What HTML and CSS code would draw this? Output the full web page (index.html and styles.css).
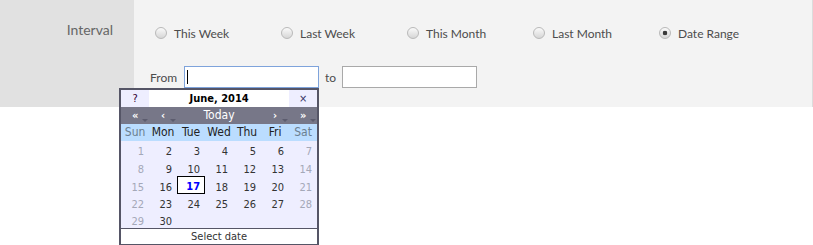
FILE: index.html
```html
<!DOCTYPE html>
<html lang="en">
    <head>
        <meta charset="UTF-8">
        <title> Report filter </title>
        <link rel="stylesheet" href="styles.css">
    </head>
    <body>
        <div class="panel">
            <div class="panel-label">Interval</div>
            <div class="panel-body">
                <div class="options">
                    <label class="option"><input type="radio" name="interval"> This Week</label>
                    <label class="option"><input type="radio" name="interval"> Last Week</label>
                    <label class="option"><input type="radio" name="interval"> This Month</label>
                    <label class="option"><input type="radio" name="interval"> Last Month</label>
                    <label class="option"><input type="radio" name="interval" checked> Date Range</label>
                </div>
                <div class="range">
                    <span class="range-label">From</span>
                    <span class="field">
                        <input type="text" class="date-input focused">
                        <span class="caret"></span>
                        <div class="calendar">
                            <table>
                                <tr class="titlerow">
                                    <td class="btn help">?</td>
                                    <td class="title" colspan="5">June, 2014</td>
                                    <td class="btn close">&times;</td>
                                </tr>
                                <tr class="headrow">
                                    <td class="nav">&laquo;</td>
                                    <td class="nav">&lsaquo;</td>
                                    <td class="today" colspan="3">Today</td>
                                    <td class="nav">&rsaquo;</td>
                                    <td class="nav">&raquo;</td>
                                </tr>
                                <tr class="daynames">
                                    <td class="weekend">Sun</td><td>Mon</td><td>Tue</td><td>Wed</td><td>Thu</td><td>Fri</td><td class="weekend">Sat</td>
                                </tr>
                                <tr class="week">
                                    <td class="weekend">1</td><td>2</td><td>3</td><td>4</td><td>5</td><td>6</td><td class="weekend">7</td>
                                </tr>
                                <tr class="week tall">
                                    <td class="weekend">8</td><td>9</td><td>10</td><td>11</td><td>12</td><td>13</td><td class="weekend">14</td>
                                </tr>
                                <tr class="week">
                                    <td class="weekend">15</td><td>16</td><td class="selected">17</td><td>18</td><td>19</td><td>20</td><td class="weekend">21</td>
                                </tr>
                                <tr class="week">
                                    <td class="weekend">22</td><td>23</td><td>24</td><td>25</td><td>26</td><td>27</td><td class="weekend">28</td>
                                </tr>
                                <tr class="week">
                                    <td class="weekend">29</td><td>30</td><td></td><td></td><td></td><td></td><td></td>
                                </tr>
                            </table>
                            <div class="status">Select date</div>
                        </div>
                    </span>
                    <span class="range-label">to</span>
                    <input type="text" class="date-input">
                </div>
            </div>
        </div>
    </body>
</html>
```

FILE: styles.css
```css
html, body {
    min-height: 100vh;
}
body {
    margin: 0;
    background-color: #fff;
    font-family: Lato, "Open Sans", sans-serif;
}
.panel {
    display: grid;
    grid-template-columns: 134px 1fr;
    height: 107px;
    background-color: #f3f3f3;
    border-right: 1px solid #dcdcdc;
}
.panel-label {
    background-color: #e1e1e1;
    text-align: right;
    padding: 21px 21px 0 0;
    font-size: 14px;
    color: #666;
}
.panel-body {
    padding: 24px 0 0 21px;
}
.options {
    display: flex;
    height: 18px;
}
.option {
    display: flex;
    align-items: center;
    flex: 0 0 126px;
    font-size: 12px;
    color: #4c4c4c;
}
.option input {
    appearance: none;
    width: 12px;
    height: 12px;
    margin: 0 7px 0 0;
    border: 1px solid #b9b9b9;
    border-radius: 50%;
    background: linear-gradient(#fafafa, #d6d6d6);
}
.option input:checked {
    background: radial-gradient(circle, #3a3a3a 0 2px, transparent 2.6px), linear-gradient(#fafafa, #d6d6d6);
}
.range {
    display: flex;
    align-items: center;
    gap: 6px;
    margin: 24px 0 0 -5px;
    font-size: 12px;
    color: #4c4c4c;
}
.range-label:first-child {
    margin-right: 1px;
}
.field {
    position: relative;
    display: flex;
}
.date-input {
    width: 135px;
    height: 22px;
    box-sizing: border-box;
    margin: 0;
    border: 1px solid #a9a9a9;
    background: #fff;
    outline: none;
}
.date-input.focused {
    border-color: #7ea3db;
}
.caret {
    position: absolute;
    left: 3px;
    top: 4px;
    width: 1px;
    height: 14px;
    background: #000;
}
.calendar {
    position: absolute;
    top: 100%;
    right: 0;
    width: 200px;
    box-sizing: border-box;
    border: 2px solid #556;
    background: #eef;
    font-family: "DejaVu Sans Condensed", "DejaVu Sans", sans-serif;
    font-size: 11px;
    line-height: 13px;
    color: #333;
    cursor: default;
}
.calendar table {
    width: 100%;
    border-collapse: separate;
    border-spacing: 0;
    table-layout: fixed;
}
.calendar tr {
    height: 17px;
}
.calendar tr.tall {
    height: 18px;
}
.calendar td {
    padding: 0;
    text-align: center;
}
.calendar .btn {
    background: #eef;
}
.calendar .help {
    color: #303;
}
.calendar .close {
    color: #336;
}
.calendar .title {
    background: #fff;
    color: #000;
    font-weight: bold;
}
.calendar .headrow td {
    background: #778;
    color: #fff;
}
.calendar .headrow .today {
    font-size: 12px;
}
.calendar .nav {
    position: relative;
    font-weight: bold;
}
.calendar .nav::after {
    content: '';
    position: absolute;
    right: 1px;
    bottom: 2px;
    border-left: 3px solid transparent;
    border-right: 3px solid transparent;
    border-top: 3px solid #5c5c6e;
}
.calendar .daynames td {
    background: #bdf;
    color: #222;
    font-size: 12px;
}
.calendar .daynames td.weekend {
    color: #6b7f90;
}
.calendar .week td {
    text-align: right;
    padding: 4px 5px 0 0;
}
.calendar .week td.weekend {
    color: #a4a8b8;
}
.calendar .week td.selected {
    border: 1px solid #000;
    background: #fff;
    color: #00f;
    font-weight: bold;
    padding: 3px 4px 0 0;
}
.calendar .status {
    height: 15px;
    line-height: 15px;
    border-top: 1px solid #556;
    background: #fff;
    color: #333;
    text-align: center;
}
```
